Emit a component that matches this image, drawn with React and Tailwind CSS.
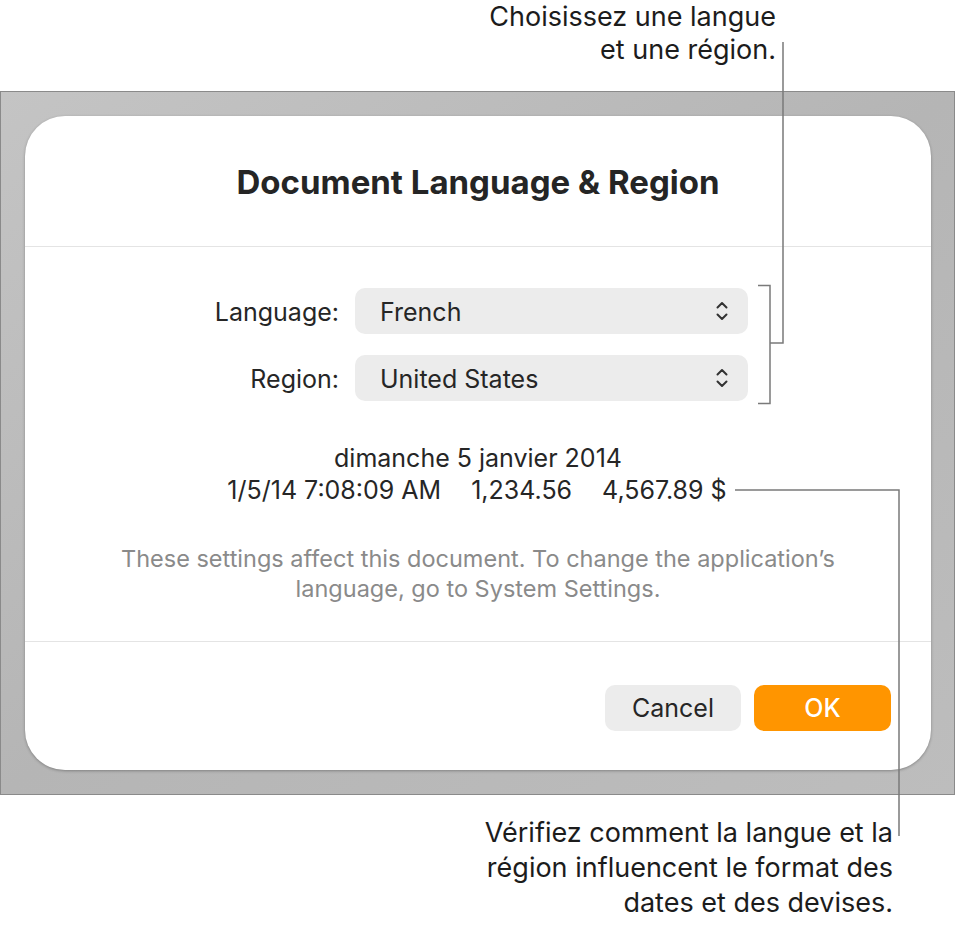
// App.jsx
const font = { fontFamily: "Inter, 'Noto Sans', sans-serif" };

const Chevrons = () => (
  <svg width="14" height="22" viewBox="0 0 14 22" fill="none" stroke="#333" strokeWidth="2" strokeLinecap="round" strokeLinejoin="round">
    <path d="M2.5 7.5 L7 3 L11.5 7.5" />
    <path d="M2.5 14.5 L7 19 L11.5 14.5" />
  </svg>
);

const Select = ({ value }) => (
  <div className="flex h-[46px] items-center justify-between rounded-[10px] bg-[#ececec] pl-[25px] pr-[19px] text-[25px] text-[#262626]">
    <span className="pt-[3px]">{value}</span>
    <Chevrons />
  </div>
);

const Callouts = () => (
  <svg className="pointer-events-none absolute inset-0" width="955" height="926" fill="none" stroke="#7a7a7a" strokeWidth="1.5">
    <path d="M783 42 V343 H770" />
    <path d="M758 285.5 H770 V403.5 H758" />
    <path d="M735 490 H899 V836" />
  </svg>
);

export default function App() {
  return (
    <div className="relative h-[926px] w-[955px] overflow-hidden bg-white" style={font}>
      {/* légende du haut */}
      <p className="pr-[179px] text-right text-[27px] leading-[33px] text-[#1c1c1c]">
        Choisissez une langue
        <br />
        et une région.
      </p>

      {/* fenêtre */}
      <div className="mt-[25px] h-[704px] w-[955px] border border-[#8a8a8a] bg-linear-to-br from-[#c4c4c4] via-[#b5b5b5] to-[#bdbdbd] pl-[24px] pr-[23px] pt-[24px]">
        <div className="flex h-[654px] flex-col rounded-[40px] bg-white shadow-[0_1px_3px_rgba(0,0,0,0.3)]">
          <div className="flex h-[130px] items-center justify-center pt-[4px]">
            <h1 className="text-[33px] font-bold text-[#252525]">Document Language &amp; Region</h1>
          </div>
          <div className="h-px bg-[#e4e4e4]" />

          <div className="mt-[41px] grid grid-cols-[314px_393px] items-center gap-x-4 gap-y-[21px]">
            <span className="pt-[3px] text-right text-[25px] text-[#262626]">Language:</span>
            <Select value="French" />
            <span className="pt-[3px] text-right text-[25px] text-[#262626]">Region:</span>
            <Select value="United States" />
          </div>

          <div className="mt-[41px] text-center text-[25px] leading-[32px] text-[#262626]">
            <div>dimanche 5 janvier 2014</div>
            <div className="flex justify-center gap-[30px] pr-[2px]">
              <span>1/5/14 7:08:09 AM</span>
              <span>1,234.56</span>
              <span>4,567.89 $</span>
            </div>
          </div>

          <p className="mt-[38px] text-center text-[23.5px] leading-[30px] text-[#8a8a8a]">
            These settings affect this document. To change the application’s
            <br />
            language, go to System Settings.
          </p>

          <div className="mt-[37px] h-px bg-[#e4e4e4]" />

          <div className="mt-[43px] flex justify-end gap-[13px] pr-[40px]">
            <button className="h-[46px] w-[136px] rounded-[10px] bg-[#ececec] pt-[2px] text-[25px] text-[#262626]">Cancel</button>
            <button className="h-[46px] w-[137px] rounded-[10px] bg-[#ff9500] pt-[2px] text-[25px] font-medium text-white">OK</button>
          </div>
        </div>
      </div>

      {/* légende du bas */}
      <p className="mt-[20px] pr-[62px] text-right text-[27px] leading-[35px] text-[#1c1c1c]">
        Vérifiez comment la langue et la
        <br />
        région influencent le format des
        <br />
        dates et des devises.
      </p>

      <Callouts />
    </div>
  );
}
